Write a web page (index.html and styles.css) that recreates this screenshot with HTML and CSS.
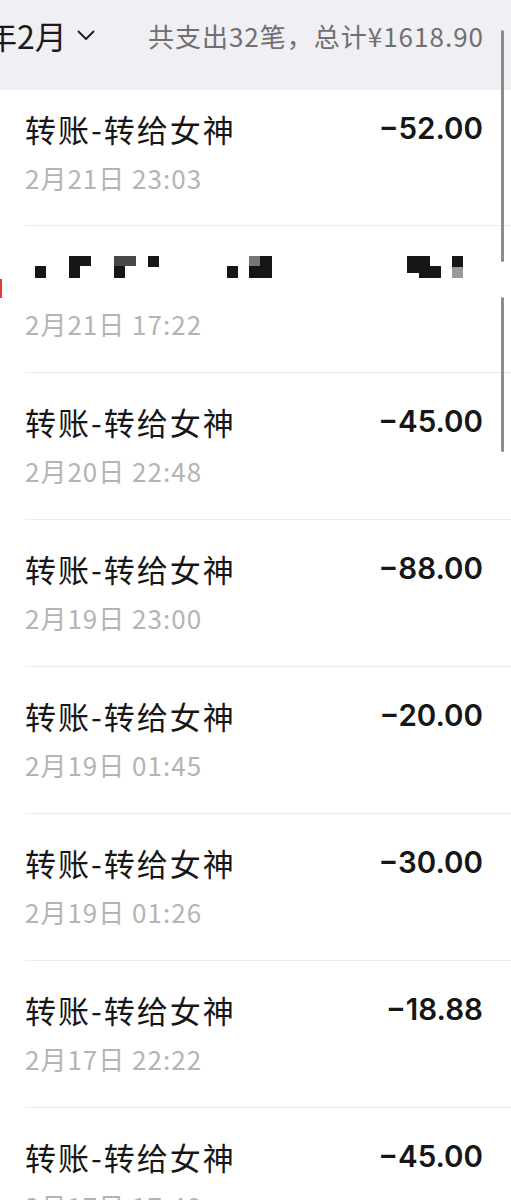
FILE: index.html
```html
<!DOCTYPE html>
<html>

<head>
    <meta name="viewport" content="width=device-width, initial-scale=1" />
    <link rel="stylesheet" href="styles.css">
</head>

<body>
    <header class="bar">
        <div class="month">年2月 <svg class="chev" viewBox="0 0 18 11" width="18" height="11"><path d="M1.5 1.5 L9 9 L16.5 1.5" fill="none" stroke="#222" stroke-width="2" stroke-linecap="round" stroke-linejoin="round"/></svg></div>
        <div class="summary">共支出32笔，总计¥1618.90</div>
    </header>

    <ul class="list">
        <li class="row">
            <div class="line"><span class="name">转账-转给女神</span><span class="amt">−52.00</span></div>
            <div class="date">2月21日 23:03</div>
        </li>
        <li class="row">
            <span class="redmark"></span>
            <div class="line mosaic">
                <i style="left:10px;top:10px;width:11px;height:12px"></i>
                <i style="left:44px;top:0;width:22px;height:10px"></i>
                <i style="left:44px;top:10px;width:11px;height:12px"></i>
                <i class="g1" style="left:89px;top:0;width:22px;height:10px"></i>
                <i style="left:89px;top:10px;width:11px;height:12px"></i>
                <i style="left:123px;top:0;width:11px;height:11px"></i>
                <i style="left:202px;top:10px;width:11px;height:12px"></i>
                <i class="g2" style="left:224px;top:0;width:11px;height:10px"></i>
                <i style="left:235px;top:0;width:12px;height:10px"></i>
                <i style="left:224px;top:10px;width:23px;height:12px"></i>
                <i style="left:382px;top:0;width:23px;height:17px"></i>
                <i style="left:394px;top:10px;width:22px;height:12px"></i>
                <i style="left:427px;top:0;width:11px;height:11px"></i>
                <i class="g3" style="left:427px;top:11px;width:11px;height:11px"></i>
            </div>
            <div class="date">2月21日 17:22</div>
        </li>
        <li class="row">
            <div class="line"><span class="name">转账-转给女神</span><span class="amt">−45.00</span></div>
            <div class="date">2月20日 22:48</div>
        </li>
        <li class="row">
            <div class="line"><span class="name">转账-转给女神</span><span class="amt">−88.00</span></div>
            <div class="date">2月19日 23:00</div>
        </li>
        <li class="row">
            <div class="line"><span class="name">转账-转给女神</span><span class="amt">−20.00</span></div>
            <div class="date">2月19日 01:45</div>
        </li>
        <li class="row">
            <div class="line"><span class="name">转账-转给女神</span><span class="amt">−30.00</span></div>
            <div class="date">2月19日 01:26</div>
        </li>
        <li class="row">
            <div class="line"><span class="name">转账-转给女神</span><span class="amt">−18.88</span></div>
            <div class="date">2月17日 22:22</div>
        </li>
        <li class="row">
            <div class="line"><span class="name">转账-转给女神</span><span class="amt">−45.00</span></div>
            <div class="date">2月17日 17:40</div>
        </li>
    </ul>

    <div class="scroll s1"></div>
    <div class="scroll s2"></div>
</body>

</html>
```

FILE: styles.css
```css
body {
    margin: 0;
    font-family: "Noto Sans CJK SC", "Noto Sans", sans-serif;
    background-color: #fff;
    width: 511px;
    height: 1200px;
    overflow: hidden;
    position: relative;
}

.bar {
    height: 90px;
    background-color: #f0eff4;
    display: flex;
    align-items: center;
    justify-content: space-between;
    padding: 0 28px 20px 0;
    box-sizing: border-box;
}

.month {
    font-size: 32px;
    color: #1a1a1a;
    margin-left: -15px;
    display: flex;
    align-items: center;
    gap: 10px;
}

.summary {
    font-size: 26px;
    letter-spacing: 1px;
    margin-right: -1px;
    color: #707070;
}

.list {
    list-style: none;
    margin: 0;
    padding: 0;
}

.row {
    position: relative;
    padding: 30px 28px 32px 25px;
    border-top: 1px solid #ececec;
    margin-left: 0;
}

.row + .row {
    margin-left: 25px;
    padding-left: 0;
}

.row:first-child {
    border-top: none;
    padding-top: 20px;
    padding-bottom: 31px;
}

.line {
    display: flex;
    justify-content: space-between;
    align-items: center;
    height: 36px;
}

.name {
    font-size: 31px;
    letter-spacing: 2px;
    color: #161616;
}

.amt {
    font-family: "Inter", "Noto Sans", sans-serif;
    font-weight: 600;
    font-size: 29.5px;
    color: #161616;
}

.date {
    margin-top: 16px;
    height: 32px;
    line-height: 32px;
    font-size: 26px;
    letter-spacing: 1px;
    color: #b4b4b4;
}

.mosaic {
    position: relative;
}

.mosaic i {
    position: absolute;
    background: #161616;
}

.mosaic .g1 { background: #484848; }
.mosaic .g2 { background: #767676; }
.mosaic .g3 { background: #999; }

.redmark {
    position: absolute;
    left: -25px;
    top: 53px;
    width: 2px;
    height: 19px;
    background: #e23a3a;
}

.scroll {
    position: absolute;
    left: 501px;
    width: 3px;
    border-radius: 2px;
    background: #8c8c8c;
}

.s1 { top: 30px; height: 232px; }
.s2 { top: 297px; height: 155px; }
```
